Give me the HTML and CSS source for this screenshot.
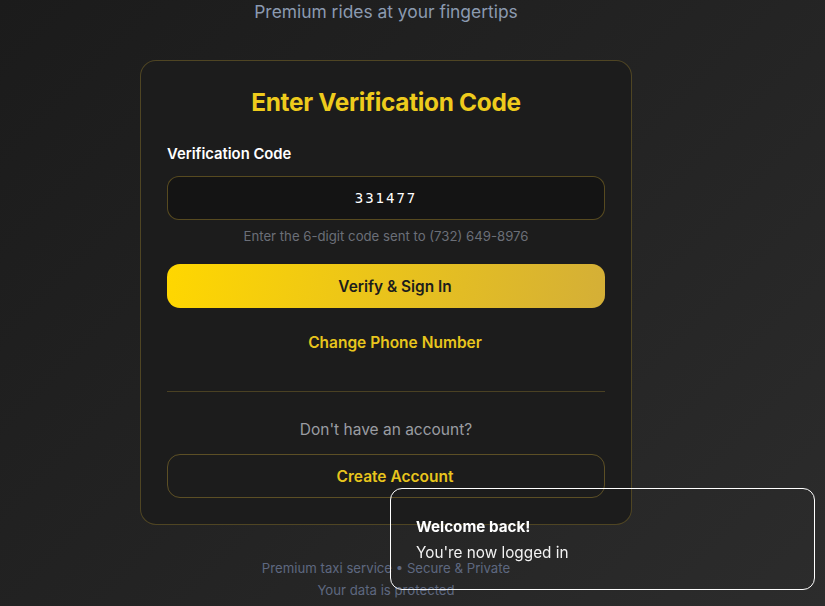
FILE: index.html
```html
<!DOCTYPE html>
<html lang="en">
<head>
<meta charset="utf-8">
<title>Verify</title>
<link rel="stylesheet" href="styles.css">
</head>
<body>
<div class="page">
  <p class="tagline">Premium rides at your fingertips</p>
  <div class="card">
    <h1 class="title">Enter Verification Code</h1>
    <label class="label" for="code">Verification Code</label>
    <input class="code-input" id="code" type="text" value="331477">
    <p class="hint">Enter the 6-digit code sent to (732) 649-8976</p>
    <button class="btn-primary">Verify &amp; Sign In</button>
    <button class="btn-link">Change Phone Number</button>
    <div class="divider"></div>
    <p class="question">Don't have an account?</p>
    <button class="btn-outline">Create Account</button>
  </div>
  <div class="footer">
    <p>Premium taxi service • Secure &amp; Private</p>
    <p>Your data is protected</p>
  </div>
</div>
<div class="toast">
  <div class="toast-title">Welcome back!</div>
  <div class="toast-desc">You're now logged in</div>
</div>
</body>
</html>
```
FILE: styles.css
```css
* { box-sizing: border-box; }
html, body { margin: 0; height: 100%; }
body {
  font-family: Inter, "Noto Sans", sans-serif;
  background: linear-gradient(135deg, #1b1b1b 0%, #232323 50%, #2c2c2c 100%);
  color: #fff;
  overflow: hidden;
}
.page {
  display: flex;
  flex-direction: column;
  align-items: center;
  padding-right: 53px;
}
.tagline {
  margin: 0;
  font-size: 17.4px;
  line-height: 24px;
  color: #8b9ab0;
}
.card {
  margin-top: 36px;
  width: 492px;
  background: #1c1c1c;
  border: 1px solid rgba(212, 175, 55, 0.28);
  border-radius: 16px;
  padding: 25px 26px 26px;
  display: flex;
  flex-direction: column;
}
.title {
  margin: 0;
  text-align: center;
  font-size: 24.4px;
  line-height: 32px;
  font-weight: 700;
  letter-spacing: -0.3px;
  color: #eecb1c;
}
.label {
  margin-top: 26px;
  font-size: 14.8px;
  line-height: 20px;
  font-weight: 600;
  color: #fff;
}
.code-input {
  margin-top: 12px;
  height: 44px;
  width: 100%;
  background: #141414;
  border: 1px solid rgba(212, 175, 55, 0.35);
  border-radius: 12px;
  color: #fff;
  text-align: center;
  font-family: "DejaVu Sans Mono", monospace;
  font-size: 14px;
  letter-spacing: 2px;
  outline: none;
}
.hint {
  margin: 7px 0 0;
  text-align: center;
  font-size: 13.2px;
  line-height: 18px;
  color: #6b6f78;
}
.btn-primary {
  margin-top: 19px;
  height: 44px;
  border: none;
  border-radius: 13px;
  padding: 0 0 0 18px;
  background: linear-gradient(100deg, #ffd700 0%, #d4af37 100%);
  color: #1c1c1c;
  font-family: inherit;
  font-size: 15.4px;
  font-weight: 600;
}
.btn-link {
  margin-top: 25px;
  background: none;
  border: none;
  padding: 0 0 0 18px;
  height: 20px;
  line-height: 20px;
  color: #e8c51d;
  font-family: inherit;
  font-size: 15.5px;
  font-weight: 600;
}
.divider {
  margin-top: 38px;
  height: 1px;
  background: rgba(212, 175, 55, 0.25);
}
.question {
  margin: 27px 0 0;
  text-align: center;
  font-size: 15.5px;
  line-height: 22px;
  color: #9a9ca2;
}
.btn-outline {
  margin-top: 13px;
  height: 44px;
  background: transparent;
  border: 1px solid rgba(212, 175, 55, 0.35);
  border-radius: 13px;
  padding: 0 0 0 18px;
  color: #e8c51d;
  font-family: inherit;
  font-size: 15.5px;
  font-weight: 600;
}
.footer {
  margin-top: 32px;
  text-align: center;
  font-size: 13.2px;
  line-height: 22px;
  color: #5e6880;
}
.footer p { margin: 0; }
.toast {
  position: fixed;
  right: 10px;
  bottom: 16px;
  width: 425px;
  height: 102px;
  border: 1px solid #fff;
  border-radius: 12px;
  padding: 2px 26px 0 25px;
  display: flex;
  flex-direction: column;
  justify-content: center;
  gap: 6px;
}
.toast-title {
  font-size: 15.2px;
  line-height: 20px;
  font-weight: 700;
}
.toast-desc {
  font-size: 15.3px;
  line-height: 20px;
  color: #f2f2f2;
}
```
